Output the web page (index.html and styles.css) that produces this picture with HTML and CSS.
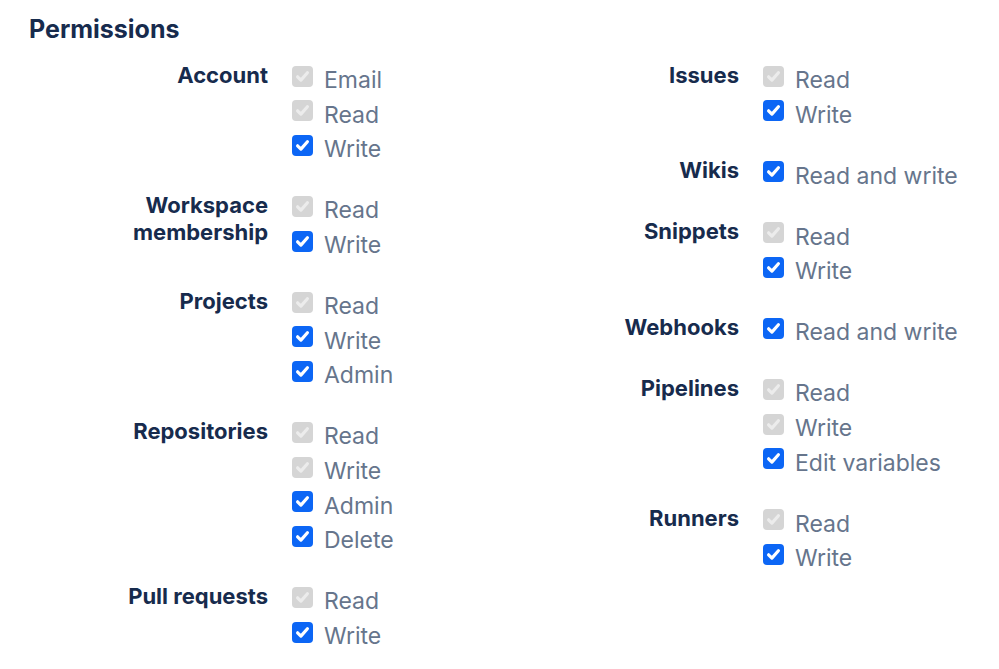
FILE: index.html
```html
<!DOCTYPE html>
<html lang="en">
<head>
<meta charset="utf-8">
<title>Permissions</title>
<link rel="stylesheet" href="styles.css">
</head>
<body>
<main class="page">
  <h2 class="title">Permissions</h2>
  <div class="columns">
    <div class="column">
      <div class="group">
        <div class="label">Account</div>
        <ul class="options">
          <li class="opt disabled"><span class="box"><svg viewBox="0 0 21 21"><path d="M5.6 10.8 L8.9 14.1 L15.4 6.8"/></svg></span><span class="txt">Email</span></li>
          <li class="opt disabled"><span class="box"><svg viewBox="0 0 21 21"><path d="M5.6 10.8 L8.9 14.1 L15.4 6.8"/></svg></span><span class="txt">Read</span></li>
          <li class="opt checked"><span class="box"><svg viewBox="0 0 21 21"><path d="M5.6 10.8 L8.9 14.1 L15.4 6.8"/></svg></span><span class="txt">Write</span></li>
        </ul>
      </div>
      <div class="group">
        <div class="label">Workspace membership</div>
        <ul class="options">
          <li class="opt disabled"><span class="box"><svg viewBox="0 0 21 21"><path d="M5.6 10.8 L8.9 14.1 L15.4 6.8"/></svg></span><span class="txt">Read</span></li>
          <li class="opt checked"><span class="box"><svg viewBox="0 0 21 21"><path d="M5.6 10.8 L8.9 14.1 L15.4 6.8"/></svg></span><span class="txt">Write</span></li>
        </ul>
      </div>
      <div class="group">
        <div class="label">Projects</div>
        <ul class="options">
          <li class="opt disabled"><span class="box"><svg viewBox="0 0 21 21"><path d="M5.6 10.8 L8.9 14.1 L15.4 6.8"/></svg></span><span class="txt">Read</span></li>
          <li class="opt checked"><span class="box"><svg viewBox="0 0 21 21"><path d="M5.6 10.8 L8.9 14.1 L15.4 6.8"/></svg></span><span class="txt">Write</span></li>
          <li class="opt checked"><span class="box"><svg viewBox="0 0 21 21"><path d="M5.6 10.8 L8.9 14.1 L15.4 6.8"/></svg></span><span class="txt">Admin</span></li>
        </ul>
      </div>
      <div class="group">
        <div class="label">Repositories</div>
        <ul class="options">
          <li class="opt disabled"><span class="box"><svg viewBox="0 0 21 21"><path d="M5.6 10.8 L8.9 14.1 L15.4 6.8"/></svg></span><span class="txt">Read</span></li>
          <li class="opt disabled"><span class="box"><svg viewBox="0 0 21 21"><path d="M5.6 10.8 L8.9 14.1 L15.4 6.8"/></svg></span><span class="txt">Write</span></li>
          <li class="opt checked"><span class="box"><svg viewBox="0 0 21 21"><path d="M5.6 10.8 L8.9 14.1 L15.4 6.8"/></svg></span><span class="txt">Admin</span></li>
          <li class="opt checked"><span class="box"><svg viewBox="0 0 21 21"><path d="M5.6 10.8 L8.9 14.1 L15.4 6.8"/></svg></span><span class="txt">Delete</span></li>
        </ul>
      </div>
      <div class="group">
        <div class="label">Pull requests</div>
        <ul class="options">
          <li class="opt disabled"><span class="box"><svg viewBox="0 0 21 21"><path d="M5.6 10.8 L8.9 14.1 L15.4 6.8"/></svg></span><span class="txt">Read</span></li>
          <li class="opt checked"><span class="box"><svg viewBox="0 0 21 21"><path d="M5.6 10.8 L8.9 14.1 L15.4 6.8"/></svg></span><span class="txt">Write</span></li>
        </ul>
      </div>
    </div>
    <div class="column">
      <div class="group">
        <div class="label">Issues</div>
        <ul class="options">
          <li class="opt disabled"><span class="box"><svg viewBox="0 0 21 21"><path d="M5.6 10.8 L8.9 14.1 L15.4 6.8"/></svg></span><span class="txt">Read</span></li>
          <li class="opt checked"><span class="box"><svg viewBox="0 0 21 21"><path d="M5.6 10.8 L8.9 14.1 L15.4 6.8"/></svg></span><span class="txt">Write</span></li>
        </ul>
      </div>
      <div class="group">
        <div class="label">Wikis</div>
        <ul class="options">
          <li class="opt checked"><span class="box"><svg viewBox="0 0 21 21"><path d="M5.6 10.8 L8.9 14.1 L15.4 6.8"/></svg></span><span class="txt">Read and write</span></li>
        </ul>
      </div>
      <div class="group">
        <div class="label">Snippets</div>
        <ul class="options">
          <li class="opt disabled"><span class="box"><svg viewBox="0 0 21 21"><path d="M5.6 10.8 L8.9 14.1 L15.4 6.8"/></svg></span><span class="txt">Read</span></li>
          <li class="opt checked"><span class="box"><svg viewBox="0 0 21 21"><path d="M5.6 10.8 L8.9 14.1 L15.4 6.8"/></svg></span><span class="txt">Write</span></li>
        </ul>
      </div>
      <div class="group">
        <div class="label">Webhooks</div>
        <ul class="options">
          <li class="opt checked"><span class="box"><svg viewBox="0 0 21 21"><path d="M5.6 10.8 L8.9 14.1 L15.4 6.8"/></svg></span><span class="txt">Read and write</span></li>
        </ul>
      </div>
      <div class="group">
        <div class="label">Pipelines</div>
        <ul class="options">
          <li class="opt disabled"><span class="box"><svg viewBox="0 0 21 21"><path d="M5.6 10.8 L8.9 14.1 L15.4 6.8"/></svg></span><span class="txt">Read</span></li>
          <li class="opt disabled"><span class="box"><svg viewBox="0 0 21 21"><path d="M5.6 10.8 L8.9 14.1 L15.4 6.8"/></svg></span><span class="txt">Write</span></li>
          <li class="opt checked"><span class="box"><svg viewBox="0 0 21 21"><path d="M5.6 10.8 L8.9 14.1 L15.4 6.8"/></svg></span><span class="txt">Edit variables</span></li>
        </ul>
      </div>
      <div class="group">
        <div class="label">Runners</div>
        <ul class="options">
          <li class="opt disabled"><span class="box"><svg viewBox="0 0 21 21"><path d="M5.6 10.8 L8.9 14.1 L15.4 6.8"/></svg></span><span class="txt">Read</span></li>
          <li class="opt checked"><span class="box"><svg viewBox="0 0 21 21"><path d="M5.6 10.8 L8.9 14.1 L15.4 6.8"/></svg></span><span class="txt">Write</span></li>
        </ul>
      </div>
    </div>
  </div>
</main>
</body>
</html>
```

FILE: styles.css
```css
* { box-sizing: border-box; }

html, body {
  margin: 0;
  padding: 0;
  background: #ffffff;
}

body {
  font-family: Inter, "Noto Sans", "Liberation Sans", sans-serif;
  color: #172B4D;
}

.page {
  padding: 14px 0 0 29px;
}

.title {
  margin: 0 0 19px 0;
  font-size: 25px;
  line-height: 30px;
  font-weight: 700;
  color: #172B4D;
}

.columns {
  display: flex;
}

.column {
  width: 471px;
  display: flex;
  flex-direction: column;
  gap: 26.3px;
}

.group {
  display: grid;
  grid-template-columns: 239px auto;
  column-gap: 24px;
  align-items: start;
}

.label {
  justify-self: end;
  max-width: 160px;
  margin-top: -1.5px;
  text-align: right;
  font-size: 22px;
  line-height: 27px;
  font-weight: 700;
  color: #172B4D;
}

.options {
  list-style: none;
  margin: 0;
  padding: 0;
}

.opt {
  display: flex;
  align-items: flex-start;
  height: 34.7px;
}

.box {
  flex: none;
  width: 21px;
  height: 21px;
  margin-top: 2.7px;
  margin-right: 11px;
  border-radius: 4px;
  display: block;
}

.box svg {
  display: block;
  width: 21px;
  height: 21px;
}

.box path {
  fill: none;
  stroke: #ffffff;
  stroke-width: 3.2;
  stroke-linecap: round;
  stroke-linejoin: round;
}

.checked .box {
  background: #0c66f5;
}

.disabled .box {
  background: #d5d5d5;
}

.disabled .box path {
  stroke: #ececec;
}

.txt {
  font-size: 23px;
  line-height: 34.7px;
  font-weight: 400;
  color: #66758c;
  white-space: nowrap;
}
```
